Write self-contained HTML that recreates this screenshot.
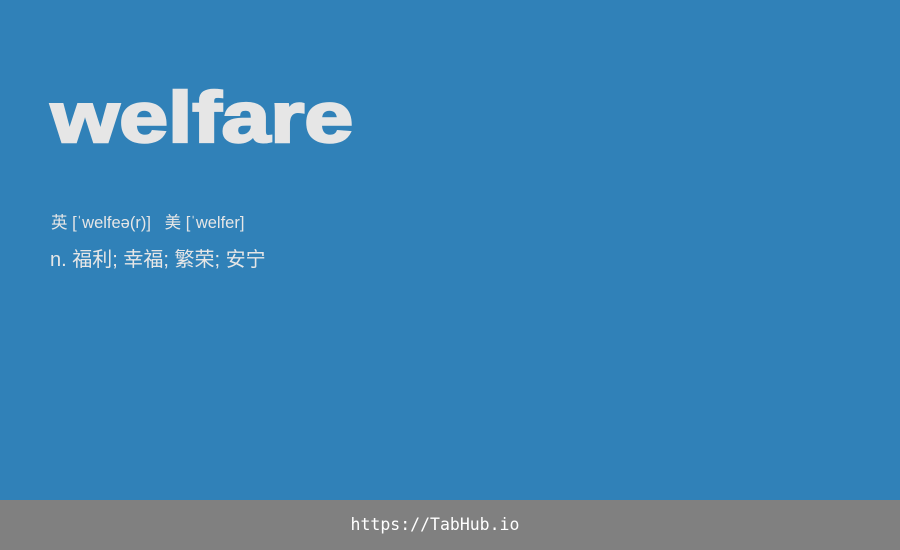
<!DOCTYPE html>
<html><head><meta charset="utf-8"><style>
html,body{margin:0;padding:0;}
body{width:900px;height:550px;background:#3081b8;position:relative;overflow:hidden;font-family:"Liberation Sans","Noto Sans CJK SC",sans-serif;color:#e6e6e6;}
.w{position:absolute;left:51px;top:83px;font-size:71px;font-weight:bold;line-height:71px;-webkit-text-stroke:2.5px #e6e6e6;transform:scaleX(1.235);transform-origin:0 0;white-space:nowrap;}
.p{position:absolute;left:51px;top:213px;font-size:16.5px;line-height:20px;}
.d{position:absolute;left:50px;top:248px;font-size:20px;line-height:24px;}
.f{position:absolute;left:0;top:500px;width:870px;padding-right:30px;height:50px;background:#808080;color:#fff;font-family:"DejaVu Sans Mono","Liberation Mono",monospace;font-size:16.5px;line-height:50px;text-align:center;}
</style></head><body>
<div class="w">welfare</div>
<div class="p">英 [ˈwelfeə(r)]&nbsp;&nbsp;&nbsp;美 [ˈwelfer]</div>
<div class="d">n. 福利; 幸福; 繁荣; 安宁</div>
<div class="f">https://TabHub.io</div>
</body></html>
